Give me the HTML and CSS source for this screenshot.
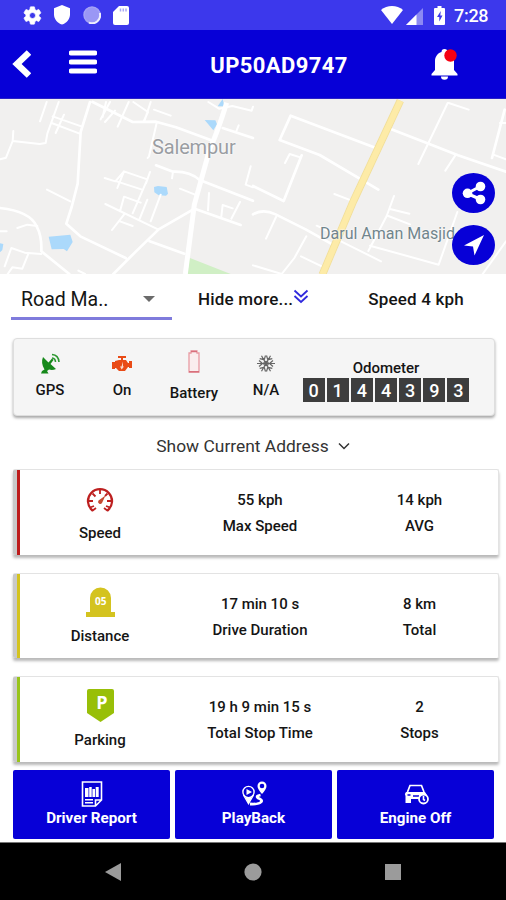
FILE: index.html
```html
<!DOCTYPE html>
<html lang="en">
<head>
<meta charset="utf-8">
<title>Vehicle tracking</title>
<link rel="stylesheet" href="styles.css">
</head>
<body>
<header class="status">
  <div class="status-left">
    <svg class="s-gear" viewBox="1 1 22 22" width="19" height="19"><path fill="#fff" stroke="#fff" stroke-width=".8" fill-rule="evenodd" d="M19.4 13c.1-.7.1-1.300 0-2l2.100-1.600c.2-.2.3-.5.100-.7l-2-3.400c-.1-.2-.4-.3-.6-.2l-2.500 1a7 7 0 0 0-1.700-1l-.4-2.600c0-.3-.2-.5-.5-.5h-4c-.3 0-.5.200-.5.500L9 5.100a7 7 0 0 0-1.700 1l-2.500-1c-.2-.1-.5 0-.6.200l-2 3.400c-.1.200-.1.500.100.700L4.400 11a8 8 0 0 0 0 2l-2.100 1.600c-.2.200-.3.500-.1.700l2 3.400c.1.200.4.300.6.200l2.500-1a7 7 0 0 0 1.700 1l.4 2.600c0 .3.200.5.500.5h4c.3 0 .5-.2.500-.5l.4-2.600a7 7 0 0 0 1.700-1l2.500 1c.2.100.5 0 .6-.2l2-3.400c.1-.2.100-.5-.1-.7zM12 15.500a3.500 3.500 0 1 1 0-7 3.500 3.500 0 0 1 0 7z"/></svg>
    <svg class="s-shield" viewBox="0 0 16 20" width="16" height="20"><path fill="#fff" d="M8 0l8 3.200v6c0 5-3.400 8.800-8 10.300C3.400 18 0 14.200 0 9.200v-6z"/></svg>
    <svg class="s-ring" viewBox="0 0 18 18" width="18" height="18"><circle cx="9" cy="9" r="8" fill="#9a97f5" stroke="#a5a2f6" stroke-width="1.500"/><path d="M16.800 7A8 8 0 0 1 6 16.600" fill="none" stroke="#eeeefd" stroke-width="2"/></svg>
    <svg class="s-sd" viewBox="0 0 16 19" width="16" height="19"><path fill="#fff" d="M6 0h8a2 2 0 0 1 2 2v15a2 2 0 0 1-2 2H2a2 2 0 0 1-2-2V6z"/><path d="M7.500 2.500v3M10.300 2.500v3M13 2.500v3" stroke="#aaa8f5" stroke-width="1.500"/></svg>
  </div>
  <div class="status-right">
    <svg class="s-wifi" viewBox="0 0 22 18" width="22" height="18"><path fill="#fff" d="M11 18L0 4C6-1.300 16-1.300 22 4z"/></svg>
    <svg class="s-cell" viewBox="0 0 17 17" width="17" height="17"><path fill="#8c89f3" d="M17 0v17H0z"/><path fill="#fff" d="M10.500 6.500V17H0z"/></svg>
    <svg class="s-batt" viewBox="0 0 11 19" width="11" height="19"><path fill="#fff" d="M3.500 0h4v2H10q1 0 1 1v15q0 1-1 1H1q-1 0-1-1V3q0-1 1-1h2.500z"/><path fill="#3c38ec" d="M6.800 5L3 11h2.300V15.500L8.500 9.500H6.300z"/></svg>
    <span class="clock">7:28</span>
  </div>
</header>
<nav class="appbar">
  <svg class="back" viewBox="0 0 20 28" width="20" height="28"><path d="M18 2.500L6 14l12 11.500" fill="none" stroke="#fff" stroke-width="6.500"/></svg>
  <svg class="burger" viewBox="0 0 28 24" width="28" height="24"><path d="M2 3h24M2 12h24M2 21h24" stroke="#fff" stroke-width="4.800" stroke-linecap="round"/></svg>
  <h1 class="title">UP50AD9747</h1>
  <svg class="bell" viewBox="0 0 27 31" width="27" height="31"><path fill="#fff" d="M10.500 3a3 3 0 0 1 6 0c4 1 6.500 5 6.500 9v9l3.500 4v1.500H.5V25L4 21v-9c0-4 2.500-8 6.500-9zM10 27.500h7a3.500 3.200 0 0 1-7 0z"/><circle cx="19.500" cy="6.500" r="6.200" fill="#f60012"/></svg>
</nav>
<section class="map">
  <svg class="map-art" viewBox="0 0 1518 528" width="506" height="176">
    <rect width="1518" height="528" fill="#f1f0ef"/>
    <g fill="#abd9fb"><path d="M614 66l32 1 5 12-11 18zM653 25l15-22 5 22zM462 267l12-3 26 3 4 20-6 6-22-1-13-9zM146 416l65-6 7 22-17 28-10-7-36 1zM0 436l10 2-3 18-7 7z"/></g>
    <path fill="#d0efc5" d="M568 479l124 49H562z"/>
    <g fill="none" stroke="#fff" stroke-width="8" stroke-linejoin="round" stroke-linecap="round">
      <path d="M270 12l-28 90-9 155-18 70-16 50 42 38 136 65M278 12l120 60 70-1 60 17 110 40M340 528l65-65 71-69 104-60M449 430l104 37M0 330q90 10 110 55 16 30 14 75l84 68"/>
      <path d="M468 202l51 19q50-2 80 25l160 62M586 333l136 48M668 90l91 30"/>
      <path d="M1174 94l114 44 86 34 144 49M759 264l92 45 54-137M839 126l120 45 176 104M839 126l33-73 254 96M759 349q30-18 68 0l90 45 80 45M1514 35l-38 145"/>
    </g>
    <g fill="none" stroke="#fff" stroke-width="6" stroke-linejoin="round" stroke-linecap="round">
      <path d="M176 12l-34 95-5 28-18 3-81-9 2-30M38 129l-20 50-18 5M140 12l-20 58M158 55l86 30M155 75l84 32M192 50l-25 55M318 12l-10 45M330 12l-28 52M345 38l-30 34M386 12l-33 74M400 12l44 30-14 30M452 12l-18 55M462 35l50 18M625 12l32 20 40-8 58 14 4-12M716 82l-8 20M470 75l-23 100-4 5"/>
      <path d="M314 240l32 10 26-30 70 24-44 102M450 222l-12 34M352 270l20-50M350 250l74 24M316 318l158 76M360 340l12-44 50 18M372 350l-36 46M360 370l38 14M442 305l-24 60M482 290l-30 80M141 275l70 35M540 272l45 18M627 285l-3 52M664 355l4-34 30 10M694 362l26-50M519 221l-3 20M0 400h20M52 390l30-10 30 4M14 505l20-55 40 14 50 4M84 470l-17 42-30-4-14 20M235 518l20 10M752 205l-15 55 22 8"/>
      <path d="M1343 15l-88 183M1346 15l60 20M1366 172l-30 46M1003 288l58 22M855 195l14-27 32 10M1182 294l-22 60-55 105M1170 333l58 14M1165 354l65 25M1110 443l206 57 56-158M828 357l-30 65M759 502l86 26 38-48 36-65M903 475l75 36M950 383l55 25M1023 430l120 60M1480 170l38 14M1518 430l-70 98M1500 75h18"/>
    </g>
    <path d="M680 14Q650 110 630 150L583 320l-27 208" fill="none" stroke="#fff" stroke-width="15"/>
    <path d="M1201 8L1060 310l-93 220" fill="none" stroke="#f2df9a" stroke-width="23"/>
    <path d="M1201 8L1060 310l-93 220" fill="none" stroke="#fdeba7" stroke-width="18"/>
  </svg>
  <span class="place town">Salempur</span>
  <span class="place mosque">Darul Aman Masjid</span>
  <div class="fabs">
    <button class="fab"><svg viewBox="0 0 24 24" width="24" height="24"><path d="M19 5L5 12.500l14 6" fill="none" stroke="#fff" stroke-width="3"/><g fill="#fff"><circle cx="18.500" cy="5.500" r="4.800"/><circle cx="5.500" cy="12.300" r="4.800"/><circle cx="18.500" cy="18.500" r="4.800"/></g></svg></button>
    <button class="fab"><svg viewBox="0 0 24 24" width="24" height="24"><path fill="#fff" d="M22 2L12.500 22.500l-1.500-9L2 12.500z"/></svg></button>
  </div>
</section>
<section class="controls">
  <div class="select"><span>Road Ma..</span><i class="caret"></i></div>
  <div class="hide-more">Hide more...<svg viewBox="0 0 16 15" width="16" height="15"><path d="M1.500 1.500L8 7.500l6.500-6M1.500 7L8 13l6.500-6" fill="none" stroke="#3029dd" stroke-width="1.800"/></svg></div>
  <div class="speed-now">Speed 4 kph</div>
</section>
<section class="sensors">
  <div class="sensor"><svg viewBox="0 0 20 21" width="20" height="21"><path fill="#16891b" d="M3 4l5.500 5.500L12 5.500 13.500 7l-3 4 5.500 5q-3.500 1.500-7 .5L7 18l1.500 2.500H1L2 18l2.500-1.500Q.5 10 3 4z"/><path d="M12 5q3.500.5 3.500 4M12 1.500q6.500.5 7 7.500" fill="none" stroke="#2b972f" stroke-width="1.600"/></svg><span>GPS</span></div>
  <div class="sensor"><svg viewBox="0 0 20 21" width="20" height="21"><path fill="#e94b16" d="M6 3h8v2h-3v2h3l2 3h1V8h3v7h-3v-1h-1l-3 4H7l-3-3H3v1H0V9h3V8l4-1h2V5H6z"/><path fill="#f8d9cc" d="M11 8.500v5h1l-2.300 3L8 13.500h1.500z"/></svg><span>On</span></div>
  <div class="sensor low"><svg viewBox="0 0 14 24" width="14" height="24"><path d="M2 3h2V1h6v2h2v19H2z" fill="#faeeee" stroke="#e99ba3" stroke-width="1.300"/><path d="M2 21.800h10M4 1.500h6" stroke="#d8707c" stroke-width="1.500"/></svg><span>Battery</span></div>
  <div class="sensor"><svg viewBox="0 0 20 21" width="20" height="21"><g fill="none" stroke="#666" stroke-width="1.200"><path d="M1 10.500h18M5.500 2.700l9 15.600M14.500 2.700l-9 15.600M3 7.500l3.500 3L3 13.500M17 7.500l-3.500 3 3.500 3M9.500 2.500l-1.300 4.200-4.500-1M16.300 5.700l-4.500 1-1.300-4.200M3.700 15.300l4.500-1 1.300 4.200M10.500 18.500l1.300-4.200 4.500 1"/><circle cx="10" cy="10.500" r="2.200"/></g></svg><span>N/A</span></div>
  <div class="odometer"><span>Odometer</span><div class="digits"><b>0</b><b>1</b><b>4</b><b>4</b><b>3</b><b>9</b><b>3</b></div></div>
</section>
<div class="address"><span>Show Current Address</span><svg viewBox="0 0 12 8" width="12" height="8"><path d="M1 1.500l5 5 5-5" fill="none" stroke="#333" stroke-width="1.500"/></svg></div>
<main class="cards">
  <article class="card red">
    <div class="kind"><svg viewBox="0 0 28 26" width="28" height="26"><path d="M6.500 23.500A12 12 0 1 1 21.500 23.500" fill="none" stroke="#bd2020" stroke-width="2.300"/><path d="M3 14h4M25 14h-4M14 2v5M6.500 6.500l3 3M21.500 6.500l-2.500 2.500M4 20.500l4-1.500M24 20.500L20 19M6 24l4-3M22 24l-4-3" stroke="#bd2020" stroke-width="1.800"/><path d="M19.500 8.500l-7 5a2 2 0 1 0 3.500 2.500z" fill="#c54a31"/></svg><span>Speed</span></div>
    <div class="stat"><span>55 kph</span><span>Max Speed</span></div>
    <div class="stat"><span>14 kph</span><span>AVG</span></div>
  </article>
  <article class="card yellow">
    <div class="kind"><svg viewBox="0 0 29 30" width="29" height="30"><path fill="#d4c31f" d="M4 25V11a10.500 10.500 0 0 1 21 0v14h4v5H0v-5z"/><text x="14.700" y="18" class="stone">05</text></svg><span>Distance</span></div>
    <div class="stat"><span>17 min 10 s</span><span>Drive Duration</span></div>
    <div class="stat"><span>8 km</span><span>Total</span></div>
  </article>
  <article class="card green">
    <div class="kind"><svg viewBox="0 0 27 33" width="27" height="33"><path fill="#98bf08" d="M2 0h23q2 0 2 2v22L13.500 33 0 24V2q0-2 2-2z"/><text x="14.800" y="20" class="park">P</text></svg><span>Parking</span></div>
    <div class="stat"><span>19 h 9 min 15 s</span><span>Total Stop Time</span></div>
    <div class="stat"><span>2</span><span>Stops</span></div>
  </article>
</main>
<section class="actions">
  <button class="action"><svg viewBox="0 0 22 26" width="22" height="26"><path d="M1.500 1h19v18l-6 6h-13zM14.500 25v-6h6" fill="none" stroke="#fff" stroke-width="1.600"/><path d="M4 7h3.500v9H4zM8.200 6h2.500v10H8.200zM11.400 8h2.600v8h-2.600zM14.700 6h3v10h-3z" fill="#fff"/><path d="M4 18.800h8M4 21.800h8" stroke="#fff" stroke-width="1.500"/></svg><span>Driver Report</span></button>
  <button class="action"><svg viewBox="0 0 26 26" width="26" height="26"><g fill="none" stroke="#fff" stroke-width="1.400"><circle cx="7.500" cy="11" r="5.600"/><path d="M2.500 14l5 8.500 5-8.500"/></g><path fill="#fff" fill-rule="evenodd" d="M21 13q-4.500-5-4.500-8a4.500 4.500 0 0 1 9 0q0 3-4.500 8zM21 7.300a2.300 2.300 0 1 0 0-4.600 2.300 2.300 0 0 0 0 4.600z"/><path d="M5.500 8v6l5.500-3zM4.500 17h6l-3 5z" fill="#fff"/><path d="M19.500 14q-5 1-2.500 3 5 2 3 4-2 2.500-11 2" fill="none" stroke="#fff" stroke-width="2.800"/></svg><span>PlayBack</span></button>
  <button class="action"><svg viewBox="0 0 26 26" width="26" height="26"><path d="M4.500 11L7 4.500h11.500l2.500 6.500" fill="none" stroke="#fff" stroke-width="1.700"/><path fill="#fff" d="M3 11h19l2 3v7h-7v-3H8v4H2.500v-7Q1 13 3 11z"/><path d="M4.500 14h3M10 15h6" stroke="#0700d7" stroke-width="1.600"/><circle cx="20.500" cy="18" r="4.500" fill="#0700d7" stroke="#fff" stroke-width="1.800"/><path d="M20.500 15v3.500l1.500 1" fill="none" stroke="#fff" stroke-width="1.600"/></svg><span>Engine Off</span></button>
</section>
<footer class="sysnav">
  <svg viewBox="0 0 16 18" width="16" height="18"><path fill="#9b9b9b" d="M16 0v18L0 9z"/></svg>
  <svg viewBox="0 0 18 18" width="18" height="18"><circle cx="9" cy="9" r="8.600" fill="#9b9b9b"/></svg>
  <svg viewBox="0 0 16 16" width="16" height="16"><rect width="16" height="16" fill="#9b9b9b"/></svg>
</footer>
</body>
</html>
```
FILE: styles.css
```css
* { box-sizing: border-box; }
body {
  margin: 0;
  width: 506px;
  height: 900px;
  overflow: hidden;
  display: flex;
  flex-direction: column;
  background: #fff;
  color: #151515;
  font-family: Roboto, "Liberation Sans", sans-serif;
}
svg { display: block; flex: none; }
button { border: 0; padding: 0; font: inherit; color: inherit; }

.status {
  height: 30px;
  flex: none;
  display: flex;
  justify-content: space-between;
  align-items: center;
  padding: 0 19px 0 23px;
  background: #3c38ec;
}
.status-left, .status-right { display: flex; align-items: center; }
.s-shield { margin-left: 12px; }
.s-ring { margin-left: 13px; }
.s-sd { margin-left: 12px; }
.s-wifi { margin-left: 0; }
.s-cell { margin-left: 3px; margin-top: 2px; }
.s-batt { margin-left: 11px; }
.clock { margin-left: 9px; margin-top: 2px; color: #fff; font-size: 18px; font-weight: 500; line-height: 20px; width: 34px; white-space: nowrap; letter-spacing: -.3px; }
.status-right { margin-right: -1px; }

.appbar {
  height: 69px;
  flex: none;
  display: flex;
  align-items: center;
  padding: 0 48px 0 11px;
  background: #0700d7;
  border-bottom: 1px solid #2a22c8;
  color: #fff;
}
.back { margin-top: -1px; }
.burger { margin: -5px 0 0 38px; }
.title { margin: 4px 0 0; flex: 1; padding-left: 30px; text-align: center; font-size: 22px; line-height: 28px; font-weight: 700; letter-spacing: .4px; }
.bell { margin-top: 1px; }

.map { position: relative; height: 175px; flex: none; overflow: hidden; }
.map-art { margin-top: -1px; }
.place { position: absolute; white-space: nowrap; text-shadow: 0 0 2px #fff, 0 0 2px #fff; }
.town { left: 152px; top: 35px; font-size: 20px; line-height: 26px; color: #9a9da2; letter-spacing: -.15px; }
.mosque { left: 320px; top: 124px; font-size: 16px; line-height: 21px; color: #71858c; }
.fabs { position: absolute; right: 11px; top: 74px; display: flex; flex-direction: column; gap: 12px; }
.fab { width: 43px; height: 40px; border-radius: 50%; background: #0700d7; display: grid; place-items: center; }

.controls { height: 64px; flex: none; display: flex; padding: 0 13px 0 11px; line-height: 24px; font-weight: 500; font-size: 17px; }
.select { width: 161px; height: 46px; border-bottom: 3px solid #7f7bdc; display: flex; justify-content: space-between; align-items: center; padding: 8px 17px 0 10px; font-size: 19.500px; font-weight: 400; }
.caret { border: 6px solid transparent; border-top-color: #6b6b6b; border-bottom: 0; margin-top: -2px; }
.hide-more { display: flex; margin: 13px 0 0 26px; white-space: nowrap; letter-spacing: .2px; }
.hide-more svg { margin: 2px 0 0 0; }
.speed-now { margin: 13px 29px 0 auto; white-space: nowrap; letter-spacing: .2px; }

.sensors {
  height: 78px;
  flex: none;
  margin: 0 11px 0 13px;
  display: flex;
  background: #f5f5f5;
  border: 1px solid #dedede;
  border-radius: 4px;
  box-shadow: 0 2px 3px rgba(0, 0, 0, .35);
  font-size: 15px;
  font-weight: 500;
  line-height: 18px;
}
.sensor { width: 72px; padding-top: 14px; display: flex; flex-direction: column; align-items: center; gap: 7px; }
.sensor.low { padding-top: 11px; gap: 10px; }
.odometer { padding-top: 20px; width: 168px; display: flex; flex-direction: column; align-items: center; }
.digits { margin-top: 1px; display: flex; gap: 2px; width: 167px; }
.digits b { flex: 1; height: 24px; background: #3d3d3d; color: #fff; text-align: center; line-height: 25px; font-size: 18px; font-weight: 500; }

.address { height: 53px; flex: none; display: flex; justify-content: center; align-items: center; gap: 9px; padding-top: 6px; font-size: 17.400px; font-weight: 400; color: #333; }

.cards { flex: none; display: flex; flex-direction: column; gap: 18px; padding: 0 7px 0 13px; }
.card {
  height: 85.500px;
  display: grid;
  grid-template-columns: 160px 160px 159px;
  border-right: 1px solid #e3e3e3;
  border-top: 1px solid #e3e3e3;
  background: linear-gradient(to right, #c9c9c9 4px, var(--tone) 4px, var(--tone) 7px, #fff 7px);
  padding-left: 7px;
  border-radius: 2px;
  box-shadow: 0 3px 3px rgba(0, 0, 0, .28);
  font-size: 15px;
  font-weight: 500;
  line-height: 18px;
  text-align: center;
}
.red { --tone: #bd1c1c; }
.yellow { --tone: #d4c31f; }
.green { --tone: #98c41a; }
.kind { display: flex; flex-direction: column; justify-content: flex-end; align-items: center; padding-bottom: 13px; }
.kind span { margin-top: 10px; }
.red .kind span { margin-top: 11px; }
.green .kind span { margin-top: 9px; }
.stat { display: flex; flex-direction: column; gap: 8px; padding-top: 21px; }
.stone { fill: #fff; font: 700 10px "Open Sans", sans-serif; text-anchor: middle; }
.park { fill: #fff; font: 700 18px "Open Sans", sans-serif; text-anchor: middle; }

.actions { flex: none; display: grid; grid-template-columns: 157px 157px 157px; gap: 5px; margin-top: 8px; padding-left: 13px; position: relative; }
.action { height: 69px; border-radius: 2px; background: #0700d7; color: #fff; display: flex; flex-direction: column; align-items: center; padding-top: 11px; font-size: 15.200px; font-weight: 700; line-height: 20px; }
.action span { margin-top: 1px; }

.sysnav { margin-top: auto; height: 58px; flex: none; background: #000; border-top: 1px solid #777; display: flex; justify-content: space-between; align-items: center; padding: 0 105px; }
```
